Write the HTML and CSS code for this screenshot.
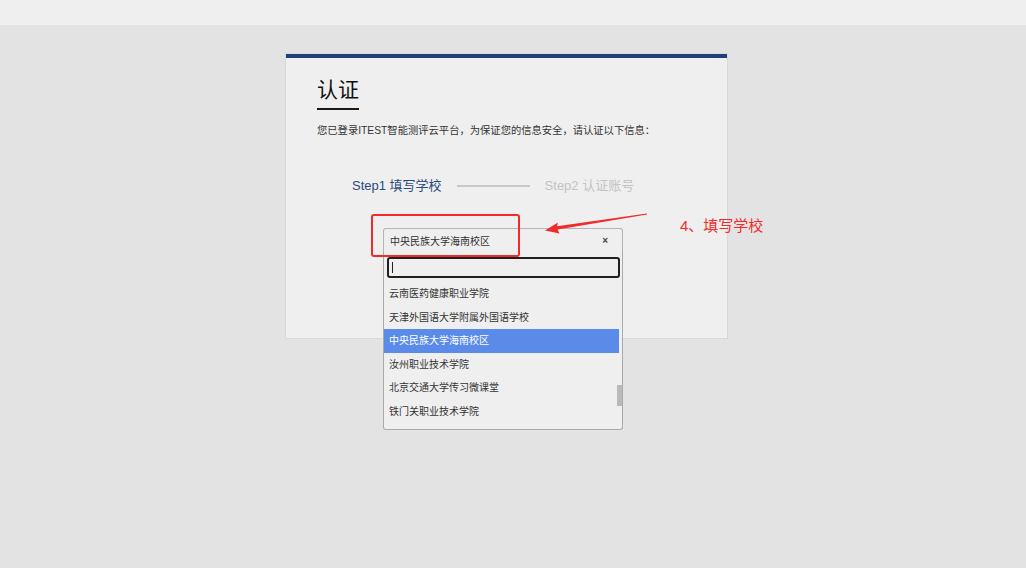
FILE: index.html
```html
<!DOCTYPE html>
<html lang="zh-CN">
<head>
    <meta charset="UTF-8">
    <title>认证</title>
    <link rel="stylesheet" href="styles.css">
</head>
<body>
    <div class="topbar"></div>
    <div class="page">
        <div class="auth-card">
            <h1 class="auth-title">认证</h1>
            <p class="auth-desc">您已登录ITEST智能测评云平台，为保证您的信息安全，请认证以下信息：</p>

            <div class="steps">
                <span class="step active">Step1 填写学校</span>
                <span class="step-line"></span>
                <span class="step">Step2 认证账号</span>
            </div>

            <div class="school-select">
                <div class="select-box">
                    <span class="select-value">中央民族大学海南校区</span>
                    <span class="select-clear">×</span>
                </div>
                <div class="select-dropdown">
                    <div class="select-search"><input type="text"></div>
                    <ul class="select-options">
                        <li>云南医药健康职业学院</li>
                        <li>天津外国语大学附属外国语学校</li>
                        <li class="highlighted">中央民族大学海南校区</li>
                        <li>汝州职业技术学院</li>
                        <li>北京交通大学传习微课堂</li>
                        <li>铁门关职业技术学院</li>
                    </ul>
                    <div class="scroll-thumb"></div>
                </div>
                <!-- tutorial annotation -->
                <div class="note-box"></div>
            </div>
        </div>
    </div>

    <svg class="note-arrow" width="1026" height="568" viewBox="0 0 1026 568">
        <polygon points="647,213.6 557,226.2 558,222.4 545,230.5 559.5,233.4 557.6,229.6 647,214.4" fill="#f22a2a"/>
    </svg>
    <div class="note-text">4、填写学校</div>
</body>
</html>
```

FILE: styles.css
```css
body {
    margin: 0;
    font-family: "Liberation Sans", Arial, "Noto Sans CJK SC", sans-serif;
    background-color: #e2e3e2;
    height: 568px;
    overflow: hidden;
}
.topbar {
    height: 25px;
    background-color: #efefef;
}
.page {
    display: flex;
    justify-content: center;
    padding-top: 29px;
    padding-right: 13px;
}
.auth-card {
    width: 441px;
    box-sizing: border-box;
    background-color: #efefef;
    border-top: 4px solid #223f79;
    box-shadow: 0 0 0 1px #d8d9d8;
    padding: 19px 31px 86px;
}
.auth-title {
    display: inline-block;
    margin: 0;
    font-size: 21px;
    line-height: 26px;
    font-weight: normal;
    color: #111;
    padding-bottom: 5px;
    border-bottom: 2px solid #1a1a1a;
}
.auth-desc {
    margin: 13px 0 0;
    font-size: 10.3px;
    line-height: 16px;
    color: #333;
}
.steps {
    display: flex;
    align-items: center;
    gap: 15px;
    margin-top: 38px;
    padding-left: 35px;
    font-size: 13px;
    line-height: 18px;
}
.step {
    color: #c4c4c4;
}
.step.active {
    color: #2b4a7c;
}
.step-line {
    width: 73px;
    height: 2px;
    background-color: #c8c8c8;
}
.school-select {
    position: relative;
    width: 240px;
    margin: 33px 0 0 66px;
}
.select-box {
    display: flex;
    justify-content: space-between;
    align-items: center;
    height: 24px;
    box-sizing: border-box;
    padding: 0 14px 0 6px;
    border: 1px solid #b5b5b5;
    border-bottom: none;
    border-radius: 3px 3px 0 0;
    background-color: #efefef;
    font-size: 10px;
    color: #333;
}
.select-clear {
    font-size: 10px;
    font-weight: bold;
    color: #444;
}
.select-dropdown {
    position: absolute;
    top: 24px;
    left: 0;
    width: 240px;
    height: 178px;
    box-sizing: border-box;
    background-color: #efefef;
    border: 1px solid #aaa;
    border-top: none;
    border-radius: 0 0 3px 3px;
    z-index: 5;
}
.select-search {
    position: relative;
    padding: 5px 2px 4px 3px;
}
.select-search input {
    display: block;
    width: 100%;
    height: 21px;
    box-sizing: border-box;
    border: 2px solid #1f1f1f;
    border-radius: 3px;
    background-color: #efefef;
    padding: 0 3px;
    outline: none;
    font-size: 10px;
}
/* caret */
.select-search::after {
    content: "";
    position: absolute;
    left: 8px;
    top: 10px;
    width: 1px;
    height: 11px;
    background-color: #222;
}
.select-options {
    list-style: none;
    margin: 0;
    padding: 0;
    width: 235px;
}
.select-options li {
    height: 23.5px;
    line-height: 24px;
    padding-left: 5px;
    font-size: 10px;
    color: #333;
}
.select-options li.highlighted {
    background-color: #5a8be8;
    color: #fff;
}
.scroll-thumb {
    position: absolute;
    right: 0;
    top: 133px;
    width: 5px;
    height: 21px;
    background-color: #b9b9b9;
}
.note-box {
    position: absolute;
    left: -12px;
    top: -14px;
    width: 149px;
    height: 43px;
    box-sizing: border-box;
    border: 2px solid #f22a2a;
    border-radius: 3px;
    z-index: 6;
}
.note-arrow {
    position: absolute;
    left: 0;
    top: 0;
    z-index: 7;
    pointer-events: none;
}
.note-text {
    position: absolute;
    left: 680px;
    top: 217px;
    font-size: 15px;
    line-height: 18px;
    color: #f22a2a;
    z-index: 7;
}
```
